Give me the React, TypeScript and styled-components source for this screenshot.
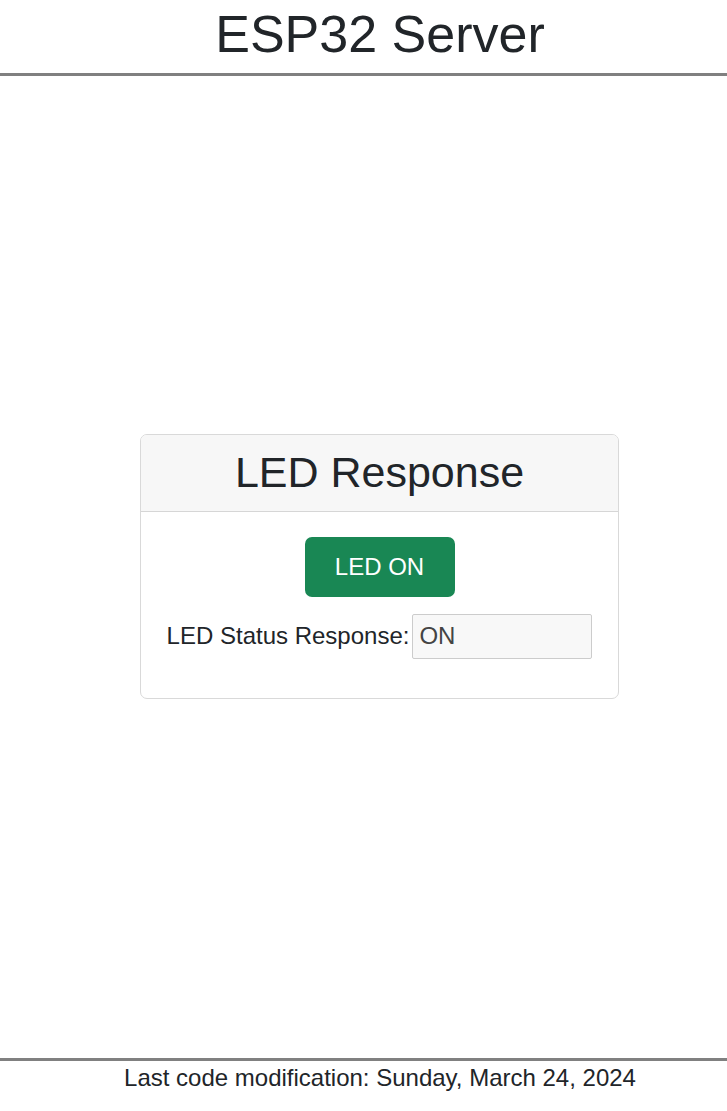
import React from "react";
import styled, { createGlobalStyle } from "styled-components";

const GlobalStyle = createGlobalStyle`
  html, body {
    margin: 0;
    padding: 0;
    overflow-x: hidden;
    background: #ffffff;
  }
  body {
    font-family: "Liberation Sans", Arial, sans-serif;
    color: #212529;
  }
`;

const Page = styled.div`
  min-height: 100vh;
  display: flex;
  flex-direction: column;
`;

const Header = styled.header`
  border-bottom: 3px solid #808080;
  padding: 4px 0 9px;
`;

const Inner = styled.div`
  width: 760px;
  text-align: center;
`;

const Title = styled.h1`
  margin: 0;
  font-size: 52px;
  font-weight: 400;
  line-height: 60px;
  color: #212529;
`;

const Main = styled.main`
  flex: 1;
  display: flex;
  align-items: center;
  width: 759px;
  justify-content: center;
  padding-bottom: 2px;
`;

const Card = styled.section`
  width: 479px;
  box-sizing: border-box;
  border: 1px solid #d9d9d9;
  border-radius: 7px;
  overflow: hidden;
  background: #ffffff;
`;

const CardHeader = styled.div`
  background: #f7f7f7;
  border-bottom: 1px solid #d6d6d6;
  padding: 14px 0 15px;
  text-align: center;
`;

const CardTitle = styled.h2`
  margin: 0;
  font-size: 43px;
  font-weight: 400;
  line-height: 47px;
`;

const CardBody = styled.div`
  padding: 25px 0 39px;
  display: flex;
  flex-direction: column;
  align-items: center;
  gap: 17px;
`;

const Button = styled.button`
  width: 150px;
  height: 60px;
  border: none;
  border-radius: 7px;
  background: #198754;
  color: #ffffff;
  font-family: "Liberation Sans", Arial, sans-serif;
  font-size: 24px;
  cursor: pointer;
  padding: 0;
`;

const StatusRow = styled.div`
  display: flex;
  align-items: center;
  gap: 3px;
`;

const Label = styled.label`
  font-size: 24px;
  line-height: 28px;
  color: #212529;
`;

const StatusInput = styled.input`
  width: 180px;
  height: 45px;
  box-sizing: border-box;
  border: 1px solid #cccccc;
  border-radius: 2px;
  background: #f8f8f8;
  color: #444444;
  font-family: "Liberation Sans", Arial, sans-serif;
  font-size: 24px;
  padding: 0 6px;
  outline: none;
`;

const Footer = styled.footer`
  border-top: 3px solid #808080;
  padding: 3px 0 19px;
`;

const FooterText = styled.p`
  margin: 0;
  font-size: 24px;
  line-height: 28px;
  color: #212529;
`;

export default function App() {
  return (
    <>
      <GlobalStyle />
      <Page>
        <Header>
          <Inner>
            <Title>ESP32 Server</Title>
          </Inner>
        </Header>
        <Main>
          <Card>
            <CardHeader>
              <CardTitle>LED Response</CardTitle>
            </CardHeader>
            <CardBody>
              <Button type="button">LED ON</Button>
              <StatusRow>
                <Label htmlFor="status">LED Status Response:</Label>
                <StatusInput id="status" value="ON" readOnly />
              </StatusRow>
            </CardBody>
          </Card>
        </Main>
        <Footer>
          <Inner>
            <FooterText>Last code modification: Sunday, March 24, 2024</FooterText>
          </Inner>
        </Footer>
      </Page>
    </>
  );
}
